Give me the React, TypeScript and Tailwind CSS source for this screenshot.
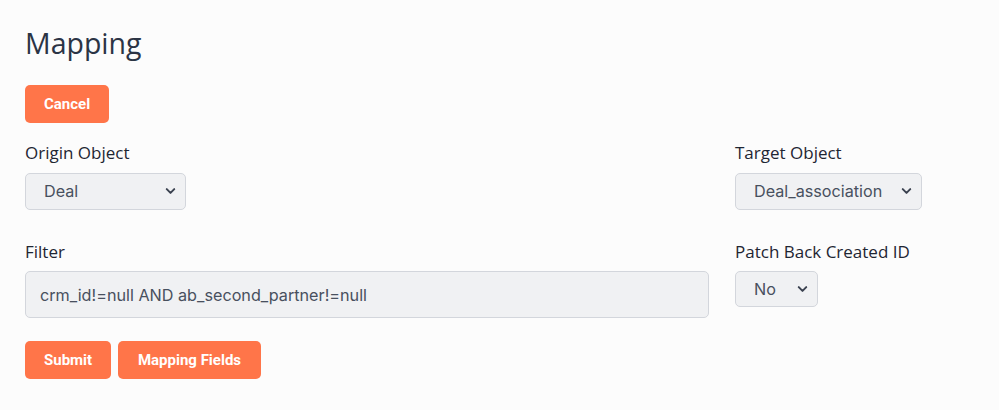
import { ChevronDown } from "lucide-react";

const label = "block text-[17px] text-[#1f2633] [font-family:'Open_Sans',sans-serif]";
const field =
  "w-full appearance-none rounded-[5px] border border-[#d3d6dc] bg-[#f0f1f3] text-[16.2px] text-[#48505e] outline-none [font-family:Inter,'Noto_Sans',sans-serif]";
const btn =
  "h-[38px] rounded-[5px] bg-[#ff7549] px-[19px] text-[15px] font-bold text-white [font-family:Roboto,sans-serif]";

function Select({ value, options, width, height }: { value: string; options: string[]; width: string; height: string }) {
  return (
    <div className={`relative ${width}`}>
      <select defaultValue={value} className={`${field} ${height} pl-[18px] pr-8`}>
        {options.map((o) => (
          <option key={o}>{o}</option>
        ))}
      </select>
      <ChevronDown
        className="pointer-events-none absolute right-[8px] top-1/2 h-[15px] w-[15px] -translate-y-1/2 text-[#3b4250]"
        strokeWidth={3.2}
      />
    </div>
  );
}

export default function App() {
  return (
    <div className="min-h-[410px] w-full bg-[#fcfcfc] px-[25px] pt-[24px]">
      <h1 className="text-[28.5px] leading-[38px] text-[#2b3445] [font-family:'Open_Sans',sans-serif]">Mapping</h1>

      <button className={`${btn} mt-[23px] w-[84px] px-0`}>Cancel</button>

      <div className="mt-[17px] flex gap-[26px]">
        <div className="w-[684px]">
          <label className={label}>Origin Object</label>
          <div className="mt-[7px]">
            <Select value="Deal" options={["Deal"]} width="w-[161px]" height="h-[37px]" />
          </div>

          <label className={`${label} mt-[29px]`}>Filter</label>
          <input
            className={`${field} mt-[7px] h-[47px] px-[14px]`}
            defaultValue="crm_id!=null AND ab_second_partner!=null"
          />

          <div className="mt-[23px] flex gap-[7px]">
            <button className={`${btn} w-[86px] px-0`}>Submit</button>
            <button className={`${btn} w-[143px] px-0`}>Mapping Fields</button>
          </div>
        </div>

        <div>
          <label className={label}>Target Object</label>
          <div className="mt-[7px]">
            <Select value="Deal_association" options={["Deal_association"]} width="w-[187px]" height="h-[37px]" />
          </div>

          <label className={`${label} mt-[29px]`}>Patch Back Created ID</label>
          <div className="mt-[7px]">
            <Select value="No" options={["No", "Yes"]} width="w-[83px]" height="h-[36px]" />
          </div>
        </div>
      </div>
    </div>
  );
}
